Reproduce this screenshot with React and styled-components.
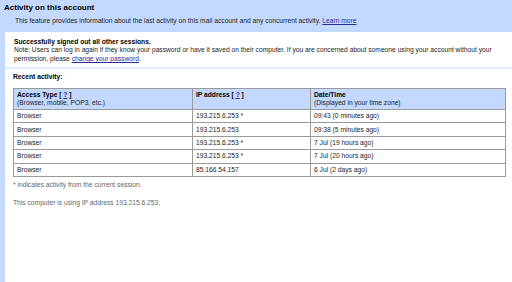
import styled, { createGlobalStyle } from "styled-components";

const GlobalStyle = createGlobalStyle`
  html, body {
    margin: 0;
    padding: 0;
    background: #c3d9ff;
  }
  body {
    font-family: "Liberation Sans", Arial, sans-serif;
    font-size: 6.7px;
    color: #222;
  }
`;

const rows = [
  { type: "Browser", ip: "193.215.6.253 *", when: "09:43 (0 minutes ago)" },
  { type: "Browser", ip: "193.215.6.253", when: "09:38 (5 minutes ago)" },
  { type: "Browser", ip: "193.215.6.253 *", when: "7 Jul (19 hours ago)" },
  { type: "Browser", ip: "193.215.6.253 *", when: "7 Jul (20 hours ago)" },
  { type: "Browser", ip: "85.166.54.157", when: "6 Jul (2 days ago)" },
];

export default function App() {
  return (
    <Page>
      <GlobalStyle />
      <Header>
        <Title>Activity on this account</Title>
        <Intro>
          This feature provides information about the last activity on this mail
          account and any concurrent activity. <Link>Learn more</Link>
        </Intro>
      </Header>
      <Panel>
        <Notice>
          <Strong>Successfully signed out all other sessions.</Strong>
          <Text>
            Note: Users can log in again if they know your password or have it
            saved on their computer. If you are concerned about someone using your
            account without your permission, please{" "}
            <Link>change your password</Link>.
          </Text>
        </Notice>
        <Section>
          <Strong>Recent activity:</Strong>
          <Table>
            <thead>
              <tr>
                <Th $w={172}>
                  <b>
                    Access Type [ <Link>?</Link> ]
                  </b>
                  <br />
                  (Browser, mobile, POP3, etc.)
                </Th>
                <Th $w={111}>
                  <b>
                    IP address [ <Link>?</Link> ]
                  </b>
                  <br />
                  &nbsp;
                </Th>
                <Th>
                  <b>Date/Time</b>
                  <br />
                  (Displayed in your time zone)
                </Th>
              </tr>
            </thead>
            <tbody>
              {rows.map((r, i) => (
                <tr key={i}>
                  <Td>{r.type}</Td>
                  <Td>{r.ip}</Td>
                  <Td>{r.when}</Td>
                </tr>
              ))}
            </tbody>
          </Table>
          <Foot $gap={4}>* indicates activity from the current session.</Foot>
          <Foot $gap={10}>This computer is using IP address 193.215.6.253.</Foot>
        </Section>
      </Panel>
    </Page>
  );
}

const Page = styled.div`
  min-height: 282px;
  display: flex;
  flex-direction: column;
  background: #c3d9ff;
`;

const Header = styled.div`
  padding: 3px 4px 7px;
`;

const Title = styled.div`
  font-size: 8px;
  font-weight: bold;
  color: #000;
  line-height: 10px;
`;

const Intro = styled.div`
  margin-top: 4px;
  padding-left: 11px;
  line-height: 8px;
`;

const Link = styled.a`
  color: #2a2a9a;
  text-decoration: underline;
  cursor: pointer;
`;

const Panel = styled.div`
  flex: 1;
  margin-left: 5px;
  background: #fff;
`;

const Notice = styled.div`
  padding: 6px 9px 3px;
  border-bottom: 2px solid #e3edff;
`;

const Strong = styled.div`
  font-weight: bold;
  color: #000;
  line-height: 7px;
`;

const Text = styled.div`
  line-height: 9.4px;
`;

const Section = styled.div`
  padding: 4px 6px 0 8px;
`;

const Table = styled.table`
  margin-top: 8px;
  width: 493px;
  border-collapse: collapse;
  border: 1px solid #9a9a9a;
`;

const Th = styled.th`
  width: ${(p) => (p.$w ? `${p.$w}px` : "auto")};
  background: #c3d9ff;
  text-align: left;
  font-weight: normal;
  vertical-align: top;
  padding: 2px 3px 1px;
  line-height: 8.6px;
  border: 1px solid #9a9a9a;
  b {
    color: #000;
  }
`;

const Td = styled.td`
  padding: 0 3px;
  height: 12.4px;
  line-height: 8px;
  border: 1px solid #9a9a9a;
`;

const Foot = styled.div`
  color: #666;
  margin-top: ${(p) => p.$gap}px;
  line-height: 8px;
`;
